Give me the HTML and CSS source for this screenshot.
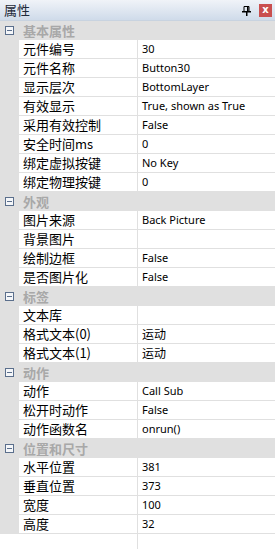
FILE: index.html
```html
<!DOCTYPE html>
<html lang="zh-CN">
<head>
	<meta charset="UTF-8">
	<title>属性</title>
	<link rel="stylesheet" href="styles.css">
</head>
<body>
	<div class="panel">
		<div class="titlebar">
			<span class="title">属性</span>
			<span class="pin">
				<svg width="9" height="10" viewBox="0 0 9 10"><path d="M2 0.5h5v5h-5z" fill="none" stroke="#000"/><rect x="5" y="1" width="1.5" height="4" fill="#000"/><rect x="0" y="5" width="9" height="1.5" fill="#000"/><rect x="4" y="6" width="1.5" height="4" fill="#000"/></svg>
			</span>
			<span class="close">x</span>
		</div>

		<div class="grid">
			<div class="section"><span class="toggle"></span><span class="cat">基本属性</span></div>
			<div class="row"><span class="name">元件编号</span><span class="value">30</span></div>
			<div class="row"><span class="name">元件名称</span><span class="value">Button30</span></div>
			<div class="row"><span class="name">显示层次</span><span class="value">BottomLayer</span></div>
			<div class="row"><span class="name">有效显示</span><span class="value">True, shown as True</span></div>
			<div class="row"><span class="name">采用有效控制</span><span class="value">False</span></div>
			<div class="row"><span class="name">安全时间ms</span><span class="value">0</span></div>
			<div class="row"><span class="name">绑定虚拟按键</span><span class="value">No Key</span></div>
			<div class="row"><span class="name">绑定物理按键</span><span class="value">0</span></div>

			<div class="section"><span class="toggle"></span><span class="cat">外观</span></div>
			<div class="row"><span class="name">图片来源</span><span class="value">Back Picture</span></div>
			<div class="row"><span class="name">背景图片</span><span class="value"></span></div>
			<div class="row"><span class="name">绘制边框</span><span class="value">False</span></div>
			<div class="row"><span class="name">是否图片化</span><span class="value">False</span></div>

			<div class="section"><span class="toggle"></span><span class="cat">标签</span></div>
			<div class="row"><span class="name">文本库</span><span class="value"></span></div>
			<div class="row"><span class="name">格式文本(0)</span><span class="value cjk">运动</span></div>
			<div class="row"><span class="name">格式文本(1)</span><span class="value cjk">运动</span></div>

			<div class="section"><span class="toggle"></span><span class="cat">动作</span></div>
			<div class="row"><span class="name">动作</span><span class="value">Call Sub</span></div>
			<div class="row"><span class="name">松开时动作</span><span class="value">False</span></div>
			<div class="row"><span class="name">动作函数名</span><span class="value">onrun()</span></div>

			<div class="section"><span class="toggle"></span><span class="cat">位置和尺寸</span></div>
			<div class="row"><span class="name">水平位置</span><span class="value">381</span></div>
			<div class="row"><span class="name">垂直位置</span><span class="value">373</span></div>
			<div class="row"><span class="name">宽度</span><span class="value">100</span></div>
			<div class="row"><span class="name">高度</span><span class="value">32</span></div>

			<div class="filler"><span class="name"></span><span class="value"></span></div>
		</div>
	</div>
</body>
</html>
```

FILE: styles.css
```css
body{
	margin: 0;
	background-color: #fff;
	font-family: "Noto Sans CJK SC", sans-serif;
	font-size: 13px;
	color: #000;
}
.panel{
	display: flex;
	flex-direction: column;
	height: 100vh;
	overflow: hidden;
}
.titlebar{
	display: flex;
	align-items: center;
	height: 21px;
	flex: none;
	padding: 0 3px 0 4px;
	background: linear-gradient(#f0f3f8, #cfdbea);
	border-bottom: 1px solid #c8d3e0;
	box-sizing: border-box;
}
.title{
	flex: 1;
	color: #1e2a3a;
	font-size: 13px;
	line-height: 20px;
}
.pin{
	display: flex;
	margin-right: 8px;
	margin-top: 1px;
}
.close{
	width: 13px;
	height: 13px;
	background-color: #c94f4f;
	color: #fff;
	font-family: "DejaVu Sans", sans-serif;
	font-weight: bold;
	font-size: 10px;
	line-height: 11px;
	text-align: center;
}
.grid{
	display: flex;
	flex-direction: column;
	flex: 1;
}
.section{
	display: flex;
	align-items: center;
	height: 19px;
	flex: none;
	background-color: #e0e0e0;
}
.toggle{
	width: 7px;
	height: 7px;
	margin: 0 9px 0 5px;
	border: 1px solid #5b6f8c;
	background: linear-gradient(#5b6f8c, #5b6f8c) center / 5px 1px no-repeat, #f4f6f9;
}
.cat{
	color: #a8a8a8;
	font-weight: bold;
	font-size: 13px;
	line-height: 18px;
}
.row, .filler{
	display: grid;
	grid-template-columns: 19px 119px 1fr;
	height: 19px;
	flex: none;
	box-sizing: border-box;
}
.row::before{
	content: "";
	background-color: #e0e0e0;
}
.filler::before{
	content: "";
}
.filler{
	flex: 1;
}
.name, .value{
	border-bottom: 1px solid #e0e0e0;
	line-height: 18px;
	white-space: nowrap;
	overflow: hidden;
}
.name{
	padding-left: 4px;
	border-right: 1px solid #e0e0e0;
}
.value{
	padding-left: 4px;
	font-family: "Noto Sans", "Noto Sans CJK SC", sans-serif;
	font-size: 11px;
}
.value.cjk{
	font-family: "Noto Sans CJK SC", sans-serif;
	font-size: 12px;
}
.filler .name, .filler .value{
	border-bottom: none;
}
```
